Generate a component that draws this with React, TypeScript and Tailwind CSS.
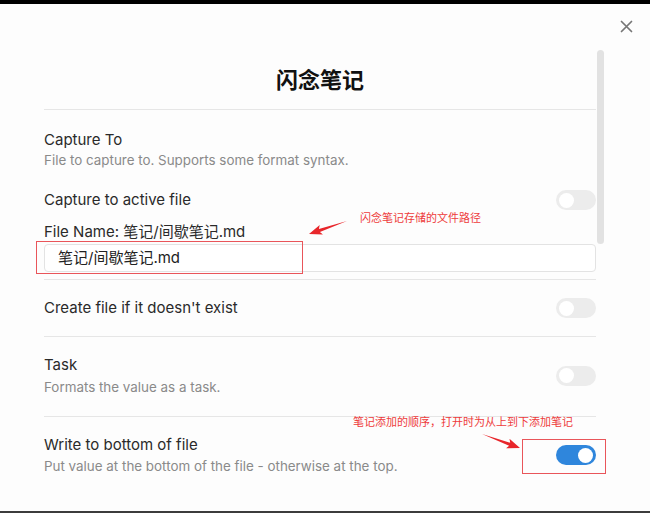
import React from 'react';

const font = { fontFamily: 'Inter, "Noto Sans CJK SC", sans-serif' };

function Toggle({ on = false }: { on?: boolean }) {
  return (
    <div
      className={`w-[40px] h-[20px] rounded-full flex items-center px-[3px] shrink-0 ${
        on ? 'bg-[#2f86dc] justify-end' : 'bg-[#ececec] justify-start'
      }`}
    >
      <div className="w-[15px] h-[15px] rounded-full bg-white" />
    </div>
  );
}

// tapered screenshot-style arrow, tail -> tip
function arrowPoints(x1: number, y1: number, x2: number, y2: number) {
  const dx = x2 - x1;
  const dy = y2 - y1;
  const len = Math.hypot(dx, dy);
  const ux = dx / len;
  const uy = dy / len;
  const nx = -uy;
  const ny = ux;
  const headLen = 11;
  const neck = 1.6;
  const barb = 5;
  const p = (x: number, y: number) => `${x.toFixed(1)},${y.toFixed(1)}`;
  return [
    p(x1, y1),
    p(x2 - ux * headLen + nx * neck, y2 - uy * headLen + ny * neck),
    p(x2 - ux * (headLen + 2) + nx * barb, y2 - uy * (headLen + 2) + ny * barb),
    p(x2, y2),
    p(x2 - ux * (headLen + 2) - nx * barb, y2 - uy * (headLen + 2) - ny * barb),
    p(x2 - ux * headLen - nx * neck, y2 - uy * headLen - ny * neck),
  ].join(' ');
}

export default function App() {
  return (
    <div className="relative w-[650px] h-[513px] overflow-hidden bg-[#fdfdfd] flex flex-col" style={font}>
      <div className="h-[4px] bg-black shrink-0" />

      {/* Modal */}
      <div className="relative flex-1 flex">
        <button className="absolute left-[619px] top-[15px] w-[15px] h-[15px] flex items-center justify-center text-[#767676]">
          <svg width="13" height="13" viewBox="0 0 13 13" fill="none" stroke="currentColor" strokeWidth="1.7" strokeLinecap="round">
            <path d="M1.5 1.5 L11.5 11.5 M11.5 1.5 L1.5 11.5" />
          </svg>
        </button>

        <div className="ml-[44px] w-[552px] pt-[46px] text-[15px] leading-[20px] text-[#2a2a2a]">
          {/* Title */}
          <div className="pt-[16px] pb-[15px] border-b border-[#e6e6e6]">
            <h1 className="text-center text-[22px] leading-[28px] font-bold text-[#111]">闪念笔记</h1>
          </div>

          {/* Capture To */}
          <div className="pt-[20px] pb-[7px] border-b border-[#e6e6e6]">
            <div>Capture To</div>
            <div className="mt-[1px] text-[13.4px] leading-[18px] text-[#8a8a8a]">
              File to capture to. Supports some format syntax.
            </div>
            <div className="mt-[21px] flex items-center justify-between">
              <div>Capture to active file</div>
              <Toggle />
            </div>
            <div className="mt-[12px]">File Name: 笔记/间歇笔记.md</div>
            <div className="mt-[2px] h-[28px] rounded-[4px] border border-[#e3e3e3] bg-white flex items-center pl-[13px] text-[15px] text-[#222]">
              笔记/间歇笔记.md
            </div>
          </div>

          {/* Create file */}
          <div className="pt-[18px] pb-[18px] border-b border-[#e6e6e6] flex items-center justify-between">
            <div>Create file if it doesn't exist</div>
            <Toggle />
          </div>

          {/* Task */}
          <div className="pt-[18px] pb-[20px] border-b border-[#e6e6e6] flex items-center justify-between">
            <div>
              <div>Task</div>
              <div className="mt-[3px] text-[13.4px] leading-[18px] text-[#8a8a8a]">Formats the value as a task.</div>
            </div>
            <Toggle />
          </div>

          {/* Write to bottom */}
          <div className="pt-[18px] flex items-center justify-between">
            <div>
              <div>Write to bottom of file</div>
              <div className="mt-[2px] text-[13.4px] leading-[18px] text-[#8a8a8a]">
                Put value at the bottom of the file - otherwise at the top.
              </div>
            </div>
            <Toggle on />
          </div>
        </div>

        {/* scrollbar thumb */}
        <div className="ml-[1px] mt-[46px] w-[7px] h-[194px] rounded-full bg-[#e2e2e2]" />
      </div>

      <div className="h-[2px] bg-[#3c3c3c] shrink-0" />

      {/* Annotations */}
      <div className="absolute left-[36px] top-[241px] w-[267px] h-[33px] border border-[#e9555a]" />
      <div className="absolute left-[522px] top-[439px] w-[84px] h-[35px] border border-[#e9555a]" />
      <div className="absolute left-[360px] top-[210px] text-[11px] leading-[16px] text-[#ee3b3b]">闪念笔记存储的文件路径</div>
      <div className="absolute left-[353px] top-[414px] text-[11px] leading-[16px] text-[#ee3b3b]">
        笔记添加的顺序，打开时为从上到下添加笔记
      </div>
      <svg className="absolute inset-0 pointer-events-none" width="650" height="513">
        <polygon points={arrowPoints(347, 221, 309, 234)} fill="#e8262b" />
        <polygon points={arrowPoints(482, 434, 520, 448)} fill="#e8262b" />
      </svg>
    </div>
  );
}
